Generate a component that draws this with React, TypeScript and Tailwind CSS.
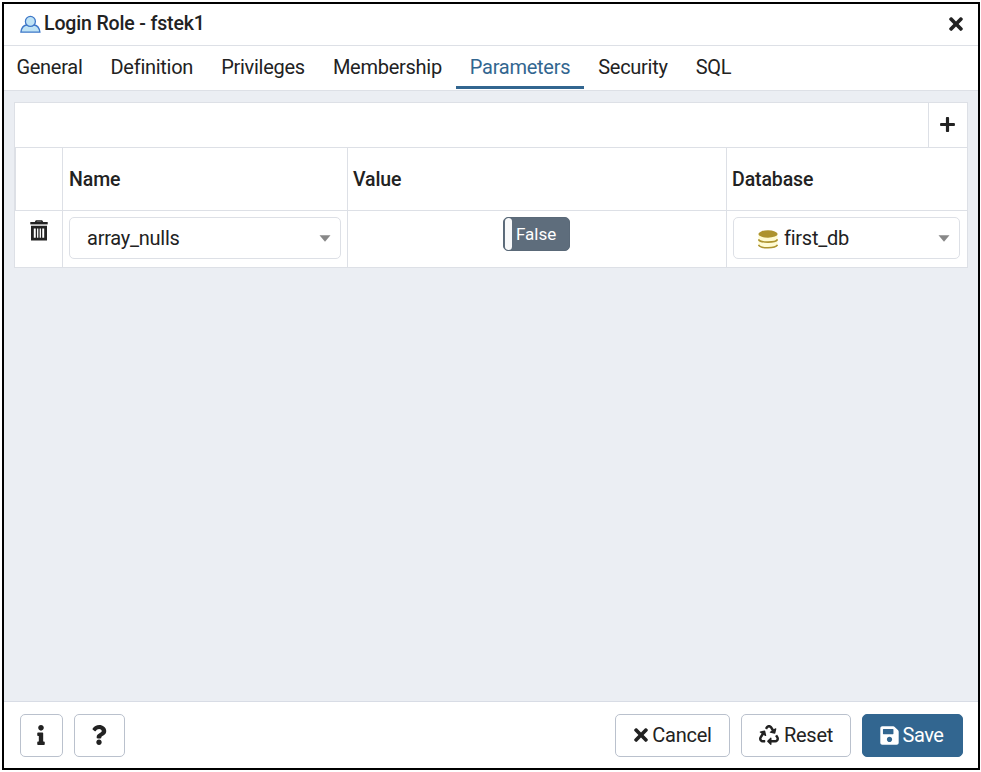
import type { ReactNode } from "react";
import { FaTimes, FaPlus, FaInfo, FaQuestion, FaRecycle, FaSave } from "react-icons/fa";

const tabs = ["General", "Definition", "Privileges", "Membership", "Parameters", "Security", "SQL"];

function UserIcon() {
  return (
    <svg width="21" height="18" viewBox="0 0 21 18" fill="#bfe3f5" stroke="#3f78c8" strokeWidth="1.3">
      <path d="M0.9 17.2C1.4 13.4 3.5 10.4 6.4 10H14.4C17.3 10.4 19.4 13.4 19.9 17.2Z" />
      <circle cx="10.4" cy="6.4" r="5" />
    </svg>
  );
}

function TrashIcon() {
  return (
    <svg width="18" height="21" viewBox="0 0 18 21" fill="none" stroke="#222222">
      <path d="M0.3 3.2H17.7" strokeWidth="2.4" />
      <path d="M5.5 2.2L6.3 1H11.7L12.5 2.2" strokeWidth="1.6" />
      <path d="M2.4 7.2H15.6V19.2H2.4Z" strokeWidth="2.8" />
      <path d="M6.4 7V19M9 7V19M11.6 7V19" strokeWidth="1.3" />
    </svg>
  );
}

function DatabaseIcon() {
  return (
    <svg width="20" height="19" viewBox="0 0 20 19">
      <path d="M0.5 4V14.8C0.5 19.2 19.5 19.2 19.5 14.8V4Z" fill="#fffbd2" />
      <ellipse cx="10" cy="4" rx="9.6" ry="3.7" fill="#ad932e" />
      <path d="M0.5 9.4C2 13 18 13 19.5 9.4M0.5 14.8C2 18.8 18 18.8 19.5 14.8" fill="none" stroke="#ad932e" strokeWidth="1.6" />
    </svg>
  );
}

function Caret() {
  return (
    <svg width="12" height="7" viewBox="0 0 12 7" fill="#888888">
      <path d="M0.5 0.3H11.5L6 6.7Z" />
    </svg>
  );
}

function FooterButton({ className, children }: { className: string; children: ReactNode }) {
  return (
    <button className={"flex h-[43px] items-center justify-center rounded-[5px] border pb-px whitespace-nowrap " + className}>
      {children}
    </button>
  );
}

export default function App() {
  return (
    <div className="h-[772px] w-[981px] bg-white pt-[2px] pl-[2px] font-['Roboto',sans-serif] text-[20px] leading-6 tracking-[-0.25px] text-[#222222]">
      <div className="flex h-[768px] w-[978px] flex-col border-2 border-black bg-white">
        <header className="flex h-[42px] items-center border-b border-[#dde0e6] pr-[12px] pb-[2px] pl-4">
          <span className="pt-px"><UserIcon /></span>
          <h1 className="ml-[3px] flex-1 text-[19.5px] font-medium tracking-[-0.15px]">Login Role - fstek1</h1>
          <FaTimes size={20} />
        </header>

        <nav className="flex h-[45px] items-start border-b border-[#dde0e6]">
          {tabs.map((tab) => (
            <div
              key={tab}
              className={
                "flex h-[43px] items-center border-b-[3px] px-[14px] pt-[2px] tracking-[-0.27px] first:pl-[12.4px] " +
                (tab === "Parameters" ? "border-[#326690] text-[#326690]" : "border-transparent")
              }
            >
              {tab}
            </div>
          ))}
        </nav>

        <main className="flex-1 bg-[#ebeef3] px-[10px] pt-[11px]">
          <section className="w-[954px] border border-[#dde0e6] bg-white">
            <div className="flex h-[45px] justify-end border-b border-[#dde0e6]">
              <button className="flex w-[39px] items-center justify-center border-l border-[#dde0e6] pr-[2px] pb-[2px]">
                <FaPlus size={17} />
              </button>
            </div>
            <div className="grid h-[63px] grid-cols-[48px_285px_379px_240px] border-b border-[#dde0e6] text-[19.5px] font-medium tracking-[-0.1px]">
              <div className="border-x border-[#dde0e6]" />
              <div className="flex items-center border-r border-[#dde0e6] pt-px pl-[6px]">Name</div>
              <div className="flex items-center border-r border-[#dde0e6] pt-px pl-[5px]">Value</div>
              <div className="flex items-center pt-px pl-[5px]">Database</div>
            </div>
            <div className="grid h-14 grid-cols-[48px_285px_379px_240px]">
              <div className="flex justify-center border-r border-[#dde0e6] pt-[9px]">
                <TrashIcon />
              </div>
              <div className="border-r border-[#dde0e6] pt-[6px] pl-[6px]">
                <div className="flex h-[42px] w-[272px] items-center justify-between rounded-[5px] border border-[#dde0e6] pr-[9px] pl-[17px]">
                  <span>array_nulls</span>
                  <Caret />
                </div>
              </div>
              <div className="flex justify-center border-r border-[#dde0e6] pt-[6px] pr-px">
                <div className="flex h-[34px] w-[67px] overflow-hidden rounded-[5px] border border-[#5a6978] bg-[#5e6d7c] text-white">
                  <span className="ml-px h-8 w-[7px] rounded-[4px] bg-[#f8f9fa]" />
                  <span className="flex flex-1 items-center pl-[4px] text-[17px] tracking-normal">False</span>
                </div>
              </div>
              <div className="pt-[6px] pl-[6px]">
                <div className="flex h-[42px] w-[227px] items-center rounded-[5px] border border-[#dde0e6] pr-[9px] pl-6">
                  <span className="pt-[3px]"><DatabaseIcon /></span>
                  <span className="ml-[6px] flex-1">first_db</span>
                  <Caret />
                </div>
              </div>
            </div>
          </section>
        </main>

        <footer className="flex h-[67px] items-center border-t border-[#d8dce5] pt-px pr-[15px] pl-4">
          <FooterButton className="w-[43px] border-[#bac1cd] pr-px"><FaInfo size={20} /></FooterButton>
          <FooterButton className="ml-[11px] w-[51px] border-[#bac1cd] pr-px"><FaQuestion size={20} /></FooterButton>
          <FooterButton className="ml-auto w-[115px] gap-px border-[#bac1cd] pr-[2px]"><FaTimes size={20} />Cancel</FooterButton>
          <FooterButton className="ml-[11px] w-[110px] gap-[5px] border-[#bac1cd]"><FaRecycle size={20} />Reset</FooterButton>
          <FooterButton className="ml-[11px] w-[101px] gap-[2px] border-[#326690] bg-[#326690] pr-[2px] tracking-[-0.4px] text-white"><FaSave size={21} />Save</FooterButton>
        </footer>
      </div>
    </div>
  );
}
